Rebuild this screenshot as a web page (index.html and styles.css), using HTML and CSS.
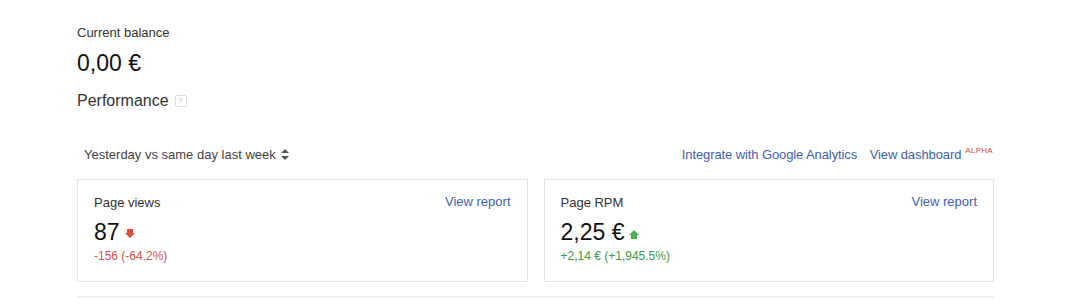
FILE: index.html
```html
<!DOCTYPE html>
<html lang="en">
<head>
    <meta charset="UTF-8">
    <meta name="viewport" content="width=device-width, initial-scale=1.0">
    <title>Home</title>
    <link rel="stylesheet" href="styles.css">
</head>
<body>
    <div class="home">
        <div class="balance">
            <div class="balance-label">Current balance</div>
            <div class="balance-value">0,00 &euro;</div>
        </div>

        <h2 class="section-title">Performance <span class="help">?</span></h2>

        <div class="toolbar">
            <div class="range-select">
                Yesterday vs same day last week
                <svg class="sort-icon" width="8" height="11" viewBox="0 0 8 11">
                    <path d="M4 0 L8 4 L0 4 Z" fill="#555"/>
                    <path d="M0 7 L8 7 L4 11 Z" fill="#555"/>
                </svg>
            </div>
            <div class="toolbar-links">
                <a href="#">Integrate with Google Analytics</a>
                <a href="#">View dashboard</a><sup class="alpha">ALPHA</sup>
            </div>
        </div>

        <div class="cards">
            <div class="card">
                <div class="card-head">
                    <span class="card-title">Page views</span>
                    <a href="#" class="card-link">View report</a>
                </div>
                <div class="card-value">
                    87
                    <svg class="trend" width="10" height="10" viewBox="0 0 10 10">
                        <path d="M2 0 H8 V4 H10 L5 9 L0 4 H2 Z" fill="#dd4b39"/>
                    </svg>
                </div>
                <div class="card-change down">-156 (-64.2%)</div>
            </div>
            <div class="card">
                <div class="card-head">
                    <span class="card-title">Page RPM</span>
                    <a href="#" class="card-link">View report</a>
                </div>
                <div class="card-value">
                    2,25 &euro;
                    <svg class="trend" width="10" height="10" viewBox="0 0 10 10">
                        <path d="M5 1 L10 6 H8 V10 H2 V6 H0 Z" fill="#4caf50"/>
                    </svg>
                </div>
                <div class="card-change up">+2,14 &euro; (+1,945.5%)</div>
            </div>
        </div>

        <div class="divider"></div>
    </div>
</body>
</html>
```

FILE: styles.css
```css
body {
    margin: 0;
    background-color: #fff;
    font-family: 'Liberation Sans', Arial, sans-serif;
    color: #222;
}

.home {
    width: 917px;
    margin-left: 77px;
    padding-top: 25px;
}

.balance-label {
    font-size: 13px;
    line-height: 16px;
    color: #333;
}

.balance-value {
    font-size: 23px;
    line-height: 26px;
    margin-top: 9px;
    color: #111;
}

.section-title {
    font-size: 16px;
    font-weight: normal;
    line-height: 20px;
    margin: 15px 0 0;
    color: #333;
    display: flex;
    align-items: center;
}

.help {
    display: inline-block;
    width: 10px;
    height: 10px;
    margin-left: 6px;
    border: 1px solid #ddd;
    border-radius: 2px;
    font-size: 8px;
    line-height: 10px;
    text-align: center;
    color: #bbb;
}

.toolbar {
    display: flex;
    justify-content: space-between;
    align-items: center;
    margin-top: 33px;
    height: 20px;
    padding: 0 1px 0 7px;
}

.range-select {
    font-size: 13px;
    color: #444;
    display: flex;
    align-items: center;
}

.sort-icon {
    margin-left: 5px;
}

.toolbar-links {
    font-size: 13px;
    letter-spacing: -0.1px;
}

.toolbar-links a {
    color: #3f5fae;
    text-decoration: none;
    margin-left: 9px;
}

.alpha {
    font-size: 8px;
    color: #dd4b39;
    margin-left: 4px;
    vertical-align: 6px;
    letter-spacing: 0.3px;
}

.cards {
    display: flex;
    gap: 16px;
    margin-top: 15px;
}

.card {
    flex: 1;
    border: 1px solid #e3e3e3;
    padding: 14px 16px 0 16px;
    height: 87px;
}

.card-head {
    display: flex;
    justify-content: space-between;
    align-items: flex-start;
}

.card-title {
    font-size: 13px;
    line-height: 16px;
    margin-top: 1px;
    color: #333;
}

.card-link {
    font-size: 13px;
    line-height: 16px;
    color: #3f5fae;
    text-decoration: none;
}

.card-value {
    font-size: 23px;
    line-height: 26px;
    margin-top: 8px;
    color: #111;
    display: flex;
    align-items: center;
}

.trend {
    margin-left: 5px;
    margin-top: 4px;
}

.card-change {
    font-size: 12px;
    line-height: 16px;
    margin-top: 3px;
}

.down {
    color: #d9534f;
}

.up {
    color: #3c9a4a;
}

.divider {
    height: 2px;
    background-color: #eee;
    margin-top: 14px;
}
```
